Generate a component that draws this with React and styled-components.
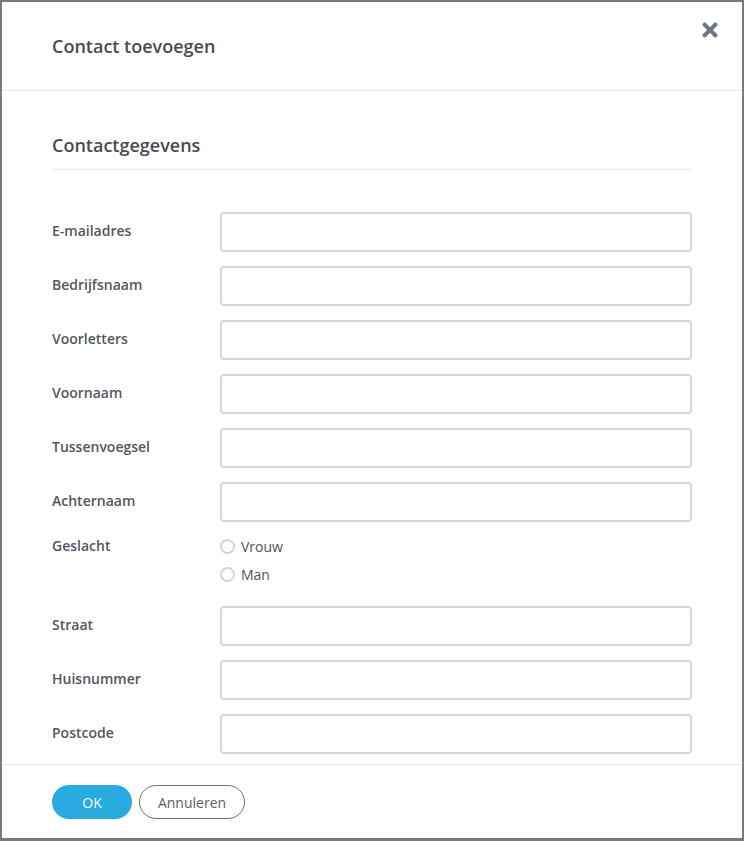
import React, { useState } from 'react';
import styled, { createGlobalStyle } from 'styled-components';
import { FaTimes } from 'react-icons/fa';

const GlobalStyle = createGlobalStyle`
  html, body {
    margin: 0;
    padding: 0;
    background: #7b7b7b;
    font-family: "Open Sans", "Liberation Sans", sans-serif;
  }
`;

const Backdrop = styled.div`
  padding: 2px 2px 3px 2px;
  height: 841px;
  box-sizing: border-box;
`;

const Modal = styled.div`
  background: #fff;
  height: 100%;
  display: flex;
  flex-direction: column;
  overflow: hidden;
`;

const Header = styled.div`
  position: relative;
  height: 89px;
  box-sizing: border-box;
  display: flex;
  align-items: center;
  padding: 0 50px;
  border-bottom: 1px solid #e8e8e8;
`;

const Title = styled.h1`
  margin: 0;
  font-size: 18px;
  font-weight: 600;
  color: #464b51;
`;

const CloseButton = styled.button`
  position: absolute;
  top: 17px;
  right: 21px;
  background: none;
  border: 0;
  padding: 0;
  color: #6d7782;
  font-size: 22px;
  cursor: pointer;
  display: flex;
`;

const Body = styled.div`
  flex: 1;
  overflow: hidden;
  padding: 42px 50px 0;
`;

const SectionTitle = styled.h2`
  margin: 0 0 42px;
  font-size: 18px;
  font-weight: 600;
  color: #464b51;
  padding-bottom: 12px;
  border-bottom: 1px solid #e8e8e8;
  line-height: 24px;
`;

const Row = styled.div`
  display: grid;
  grid-template-columns: 168px 1fr;
  align-items: ${p => (p.$top ? 'start' : 'center')};
  margin-bottom: ${p => p.$gap || 14}px;
`;

const Label = styled.label`
  font-size: 14px;
  font-weight: 600;
  color: #52575e;
  line-height: 20px;
  padding-bottom: ${p => (p.$top ? 0 : 3)}px;
`;

const Input = styled.input`
  height: 40px;
  box-sizing: border-box;
  border: 2px solid #d6d6d6;
  border-radius: 4px;
  padding: 0 10px;
  font-size: 14px;
  font-family: inherit;
  width: 100%;
  outline: none;
`;

const RadioGroup = styled.div`
  display: flex;
  flex-direction: column;
  gap: 8px;
`;

const RadioOption = styled.label`
  display: flex;
  align-items: center;
  gap: 6px;
  height: 20px;
  font-size: 14px;
  color: #4f555c;
  cursor: pointer;
`;

const RadioCircle = styled.span`
  width: 15px;
  height: 15px;
  box-sizing: border-box;
  border: 2px solid #d4d4d4;
  border-radius: 50%;
  background: ${p => (p.$checked ? '#29abe2' : '#fff')};
`;

const Footer = styled.div`
  border-top: 1px solid #e8e8e8;
  padding: 20px 50px 19px;
  display: flex;
  gap: 7px;
`;

const Button = styled.button`
  height: 34px;
  border-radius: 17px;
  font-family: inherit;
  font-size: 14px;
  cursor: pointer;
  box-sizing: border-box;
`;

const PrimaryButton = styled(Button)`
  width: 80px;
  background: #29abe2;
  border: 0;
  color: #fff;
`;

const SecondaryButton = styled(Button)`
  width: 106px;
  background: #fff;
  border: 1px solid #6a6f75;
  color: #5a5f66;
`;

const fieldsBefore = ['E-mailadres', 'Bedrijfsnaam', 'Voorletters', 'Voornaam', 'Tussenvoegsel', 'Achternaam'];
const fieldsAfter = ['Straat', 'Huisnummer', 'Postcode'];

const App = () => {
  const [gender, setGender] = useState(null);

  const renderField = name => (
    <Row key={name}>
      <Label>{name}</Label>
      <Input type="text" />
    </Row>
  );

  return (
    <>
      <GlobalStyle />
      <Backdrop>
        <Modal>
          <Header>
            <Title>Contact toevoegen</Title>
            <CloseButton aria-label="Sluiten">
              <FaTimes />
            </CloseButton>
          </Header>
          <Body>
            <SectionTitle>Contactgegevens</SectionTitle>
            {fieldsBefore.map(renderField)}
            <Row $top $gap={22}>
              <Label $top>Geslacht</Label>
              <RadioGroup>
                {['Vrouw', 'Man'].map(g => (
                  <RadioOption key={g} onClick={() => setGender(g)}>
                    <RadioCircle $checked={gender === g} />
                    {g}
                  </RadioOption>
                ))}
              </RadioGroup>
            </Row>
            {fieldsAfter.map(renderField)}
          </Body>
          <Footer>
            <PrimaryButton>OK</PrimaryButton>
            <SecondaryButton>Annuleren</SecondaryButton>
          </Footer>
        </Modal>
      </Backdrop>
    </>
  );
};

export default App;
